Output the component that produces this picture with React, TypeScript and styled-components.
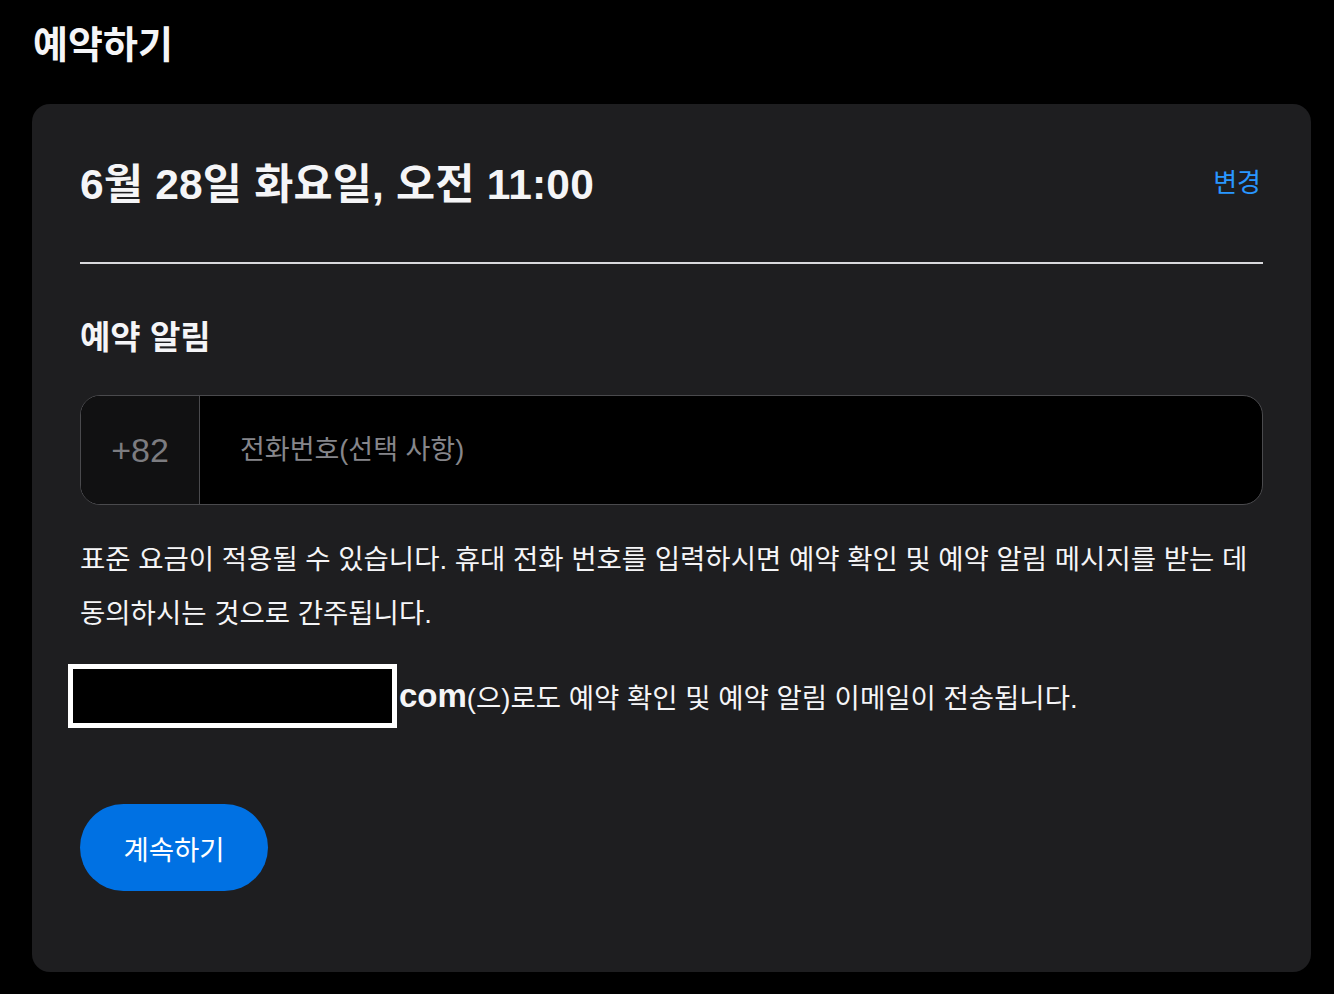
import styled, { createGlobalStyle } from 'styled-components';

const GlobalStyle = createGlobalStyle`
  html, body {
    margin: 0;
    padding: 0;
    background: #000;
  }
  body {
    font-family: "Liberation Sans", "Noto Sans CJK KR", sans-serif;
    color: #f5f5f7;
    word-break: keep-all;
  }
  * {
    box-sizing: border-box;
  }
`;

const Page = styled.div`
  padding: 20px 23px 22px 32px;
`;

const Title = styled.h1`
  margin: 0 0 0 1px;
  font-size: 38px;
  line-height: 50px;
  font-weight: 700;
  color: #f5f5f7;
`;

const Card = styled.section`
  margin-top: 34px;
  background: #1e1e20;
  border-radius: 18px;
  padding: 48px 48px 81px;
`;

const HeaderRow = styled.div`
  display: flex;
  align-items: center;
  justify-content: space-between;
  height: 56px;
`;

const DateTitle = styled.h2`
  margin: 0;
  font-size: 42.5px;
  font-weight: 700;
  color: #f5f5f7;
  letter-spacing: 0.2px;
`;

const ChangeLink = styled.a`
  font-size: 26px;
  color: #2997ff;
  text-decoration: none;
  margin-right: 2px;
  cursor: pointer;
`;

const Divider = styled.hr`
  margin: 54px 0 0;
  border: 0;
  height: 2px;
  background: #d9d9dc;
`;

const SectionTitle = styled.h3`
  margin: 56px 0 0;
  font-size: 33px;
  line-height: 36px;
  font-weight: 700;
  color: #f5f5f7;
`;

const PhoneField = styled.div`
  margin-top: 39px;
  display: flex;
  height: 110px;
  border: 1.5px solid #4a4a4d;
  border-radius: 20px;
  overflow: hidden;
  background: #000;
`;

const Prefix = styled.div`
  width: 119px;
  flex-shrink: 0;
  display: flex;
  align-items: center;
  justify-content: center;
  background: #111112;
  border-right: 1.5px solid #4a4a4d;
  color: #7c7c80;
  font-size: 34px;
`;

const PhoneInput = styled.input`
  flex: 1;
  border: 0;
  outline: none;
  background: transparent;
  padding: 0 40px;
  font-family: inherit;
  font-size: 27px;
  color: #f5f5f7;

  &::placeholder {
    color: #86868b;
  }
`;

const Notice = styled.p`
  margin: 28px 0 0;
  font-size: 27.5px;
  line-height: 54px;
  color: #f5f5f7;
`;

const EmailLine = styled.p`
  margin: 23px 0 0;
  display: flex;
  align-items: center;
  font-size: 27.5px;
  color: #f5f5f7;
`;

const Redacted = styled.span`
  display: inline-block;
  width: 329px;
  height: 64px;
  margin-left: -12px;
  margin-right: 2px;
  background: #000;
  border: 5px solid #fff;
`;

const Domain = styled.strong`
  font-size: 33px;
  font-weight: 700;
`;

const ContinueButton = styled.button`
  margin-top: 76px;
  width: 188px;
  height: 87px;
  border: 0;
  border-radius: 44px;
  background: #0071e3;
  color: #fff;
  font-family: inherit;
  font-size: 27.5px;
  cursor: pointer;
`;

export default function App() {
  return (
    <>
      <GlobalStyle />
      <Page>
        <Title>예약하기</Title>
        <Card>
          <HeaderRow>
            <DateTitle>6월 28일 화요일, 오전 11:00</DateTitle>
            <ChangeLink>변경</ChangeLink>
          </HeaderRow>
          <Divider />
          <SectionTitle>예약 알림</SectionTitle>
          <PhoneField>
            <Prefix>+82</Prefix>
            <PhoneInput type="tel" placeholder="전화번호(선택 사항)" />
          </PhoneField>
          <Notice>
            표준 요금이 적용될 수 있습니다. 휴대 전화 번호를 입력하시면 예약 확인 및 예약 알림 메시지를 받는 데
            동의하시는 것으로 간주됩니다.
          </Notice>
          <EmailLine>
            <Redacted />
            <Domain>com</Domain>(으)로도 예약 확인 및 예약 알림 이메일이 전송됩니다.
          </EmailLine>
          <ContinueButton type="button">계속하기</ContinueButton>
        </Card>
      </Page>
    </>
  );
}
